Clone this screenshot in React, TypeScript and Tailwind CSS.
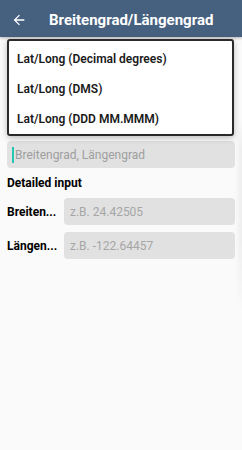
import React from "react";

const options = ["Lat/Long (Decimal degrees)", "Lat/Long (DMS)", "Lat/Long (DDD MM.MMM)"];

function BackArrow() {
  return (
    <svg width="16" height="16" viewBox="0 0 24 24" fill="white">
      <path d="M20 11H7.83l5.59-5.59L12 4l-8 8 8 8 1.41-1.41L7.83 13H20v-2z" />
    </svg>
  );
}

export default function App() {
  return (
    <div className="relative h-[450px] w-[242px] overflow-hidden bg-[#fafafa] font-['Roboto',sans-serif] text-[#1f1f1f]">
      <header className="flex h-[37px] items-center bg-[#46617f] pt-[2px] shadow-[0_1px_3px_rgba(0,0,0,0.3)]">
        <div className="flex w-[38px] justify-center">
          <BackArrow />
        </div>
        <h1 className="ml-[11px] text-[15px] font-bold leading-[18px] text-white">Breitengrad/Längengrad</h1>
      </header>

      <div className="flex flex-col px-[7px] pt-[104px]">
        <div className="flex h-[27px] items-center rounded-[4px] bg-[#e1e1e1] pl-[5px] text-[12px] text-[#9e9e9e]">
          <span className="mr-[1px] h-[16px] w-[2px] bg-[#26c6b4]" />
          Breitengrad, Längengrad
        </div>
        <div className="mt-[8px] text-[12px] font-bold leading-[14px] text-black">Detailed input</div>
        <div className="mt-[8px] flex flex-col gap-[7px]">
          {[
            ["Breiten...", "z.B. 24.42505"],
            ["Längen...", "z.B. -122.64457"],
          ].map(([label, ph]) => (
            <div key={label} className="flex items-center">
              <span className="w-[57px] text-[12px] font-bold text-black">{label}</span>
              <div className="flex h-[27px] flex-1 items-center rounded-[4px] bg-[#e1e1e1] pl-[6px] text-[12px] text-[#a6a6a6]">
                {ph}
              </div>
            </div>
          ))}
        </div>
      </div>

      {/* soft shadow along the right edge */}
      <div className="pointer-events-none absolute right-0 top-[120px] h-[190px] w-[7px] bg-gradient-to-r from-transparent to-[#ededed] [mask-image:linear-gradient(to_bottom,transparent,black_15%,black_65%,transparent)]" />

      <div className="absolute left-[7px] top-[39px] flex h-[97px] w-[227px] flex-col rounded-[3px] border-2 border-[#2a2a2a] bg-white pl-[8px] pt-[3px] shadow-[0_2px_6px_rgba(0,0,0,0.25)]">
        {options.map((o) => (
          <div key={o} className="flex h-[30px] items-center text-[12px] font-semibold text-[#1a1a1a]">
            {o}
          </div>
        ))}
      </div>
    </div>
  );
}
